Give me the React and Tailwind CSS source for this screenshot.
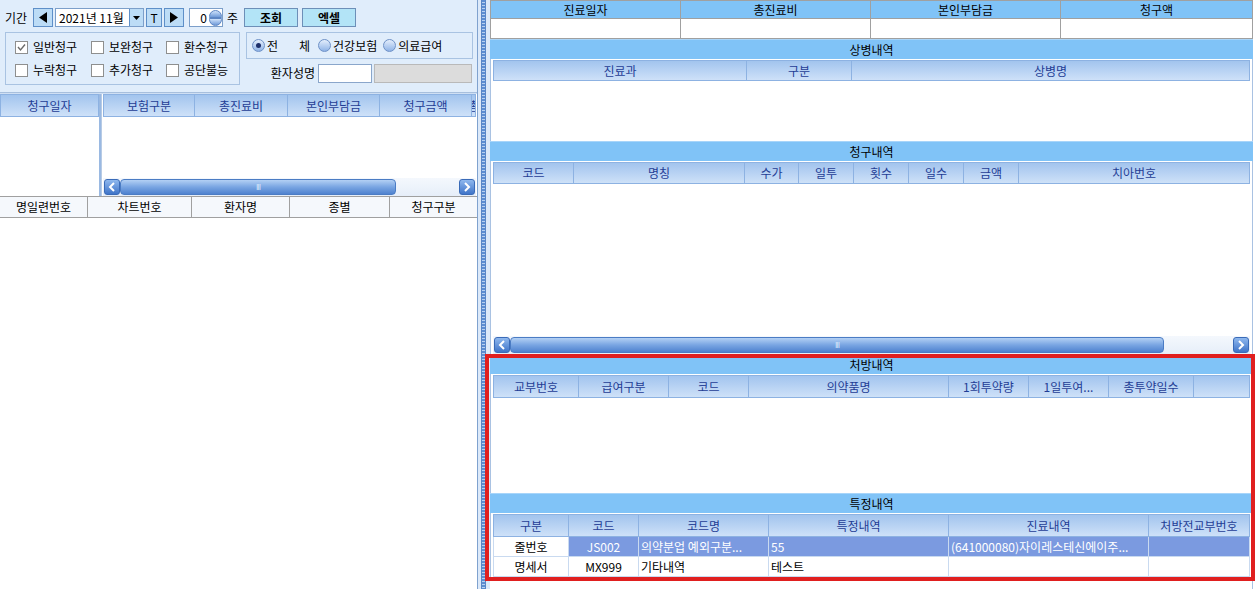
import React from 'react';

// 특정내역 / 처방내역 조회 화면 (청구 관리)

const topCols = [
    { label: '진료일자', w: 'w-[190px]' },
    { label: '총진료비', w: 'w-[190px]' },
    { label: '본인부담금', w: 'w-[190px]' },
    { label: '청구액', w: 'flex-1' },
];

const sangCols = [
    { label: '진료과', w: 'w-[253px]' },
    { label: '구분', w: 'w-[105px]' },
    { label: '상병명', w: 'flex-1' },
];

const claimCols = [
    { label: '코드', w: 'w-[80px]' },
    { label: '명칭', w: 'w-[171px]' },
    { label: '수가', w: 'w-[54px]' },
    { label: '일투', w: 'w-[55px]' },
    { label: '횟수', w: 'w-[55px]' },
    { label: '일수', w: 'w-[55px]' },
    { label: '금액', w: 'w-[55px]' },
    { label: '치아번호', w: 'flex-1' },
];

const rxCols = [
    { label: '교부번호', w: 'w-[85px]' },
    { label: '급여구분', w: 'w-[90px]' },
    { label: '코드', w: 'w-[80px]' },
    { label: '의약품명', w: 'w-[200px]' },
    { label: '1회투약량', w: 'w-[80px]' },
    { label: '1일투여...', w: 'w-[80px]' },
    { label: '총투약일수', w: 'w-[85px]' },
    { label: '', w: 'flex-1' },
];

const specCols = [
    { label: '구분', w: 'w-[75px]' },
    { label: '코드', w: 'w-[70px]' },
    { label: '코드명', w: 'w-[130px]' },
    { label: '특정내역', w: 'w-[180px]' },
    { label: '진료내역', w: 'w-[200px]' },
    { label: '처방전교부번호', w: 'flex-1' },
];

const specRows = [
    { kind: '줄번호', code: 'JS002', name: '의약분업 예외구분...', spec: '55', detail: '(641000080)자이레스테신에이주...', rx: '', selected: true },
    { kind: '명세서', code: 'MX999', name: '기타내역', spec: '테스트', detail: '', rx: '', selected: false },
];

const leftCols = [
    { label: '보험구분', w: 'w-[91px]' },
    { label: '총진료비', w: 'w-[93px]' },
    { label: '본인부담금', w: 'w-[92px]' },
    { label: '청구금액', w: 'w-[92px]' },
    { label: '총', w: 'flex-1' },
];

const listCols = [
    { label: '명일련번호', w: 'w-[88px]' },
    { label: '차트번호', w: 'w-[104px]' },
    { label: '환자명', w: 'w-[98px]' },
    { label: '종별', w: 'w-[100px]' },
    { label: '청구구분', w: 'flex-1' },
];

function GridHeader({ cols, h = 'h-[22px]' }) {
    return (
        <div className={`flex ${h} shrink-0 min-w-0 overflow-hidden bg-linear-to-b from-[#a2c4ee] to-[#cee1f8] border border-[#8db2e2]`}>
            {cols.map((c, i) => (
                <div
                    key={i}
                    className={`${c.w} shrink-0 min-w-0 flex items-center justify-center overflow-hidden whitespace-nowrap text-[#1f3d95] ${i < cols.length - 1 ? 'border-r border-[#8db2e2]' : ''}`}
                >
                    {c.label}
                </div>
            ))}
        </div>
    );
}

function SectionTitle({ children }) {
    return (
        <div className="h-[20px] shrink-0 flex items-center justify-center bg-[#80c3f7] border-t border-[#a8d5fa] text-black">
            {children}
        </div>
    );
}

function ArrowBtn({ dir }) {
    return (
        <div className="w-[16px] h-[16px] shrink-0 rounded-[3px] bg-linear-to-b from-[#8fb8ee] to-[#3f74c8] border border-[#3a6bb8] flex items-center justify-center">
            <svg width="8" height="10" viewBox="0 0 8 10">
                {dir === 'left'
                    ? <polyline points="6,1 2,5 6,9" fill="none" stroke="white" strokeWidth="2" />
                    : <polyline points="2,1 6,5 2,9" fill="none" stroke="white" strokeWidth="2" />}
            </svg>
        </div>
    );
}

function HScroll({ thumb }) {
    return (
        <div className="h-[18px] shrink-0 min-w-0 flex items-center px-[1px] bg-linear-to-b from-[#f4f8fd] to-[#e6eef9]">
            <ArrowBtn dir="left" />
            <div className={`${thumb} h-[16px] shrink-0 rounded-[4px] bg-linear-to-b from-[#b3d0f4] via-[#79a5e2] to-[#4f82cf] border border-[#4b7cc4] flex items-center justify-center`}>
                <span className="text-[8px] leading-none text-[#dce9fb] tracking-[-1px]">III</span>
            </div>
            <div className="flex-1 min-w-0" />
            <ArrowBtn dir="right" />
        </div>
    );
}

function Check({ checked, label }) {
    return (
        <label className="flex items-center gap-[5px]">
            <span className="w-[13px] h-[13px] bg-white border border-[#8e8f8f] flex items-center justify-center">
                {checked && (
                    <svg width="9" height="9" viewBox="0 0 9 9">
                        <polyline points="1,4 3.5,7 8,1.5" fill="none" stroke="#6b6b6b" strokeWidth="1.4" />
                    </svg>
                )}
            </span>
            <span>{label}</span>
        </label>
    );
}

function Radio({ checked, label }) {
    return (
        <label className="flex items-center gap-[2px]">
            <span className="w-[13px] h-[13px] rounded-full bg-linear-to-b from-[#e4eefc] to-[#8fb3e6] border border-[#6e91c7] flex items-center justify-center">
                {checked && <span className="w-[5px] h-[5px] rounded-full bg-[#1c2f6b]" />}
            </span>
            <span>{label}</span>
        </label>
    );
}

function SmallBtn({ children, w = 'w-[20px]' }) {
    return (
        <div className={`${w} h-[19px] shrink-0 flex items-center justify-center bg-[#bcdcf6] border border-[#5e8fc8] text-black`}>
            {children}
        </div>
    );
}

function LeftPanel() {
    return (
        <div className="w-[478px] shrink-0 flex flex-col border-r border-[#7fa2cf] bg-white">
            {/* 조회 조건 */}
            <div className="h-[92px] shrink-0 bg-[#e0edfb] pl-[5px] pt-[8px]">
                <div className="flex items-center h-[19px]">
                    <span className="w-[28px]">기간</span>
                    <SmallBtn>
                        <svg width="10" height="11" viewBox="0 0 10 11"><polygon points="9,0 1,5.5 9,11" fill="black" /></svg>
                    </SmallBtn>
                    <div className="ml-[2px] w-[89px] h-[19px] flex items-center bg-white border border-[#7c9fca]">
                        <span className="flex-1 pl-[3px] text-[12px]">2021년 11월</span>
                        <div className="w-[14px] h-full flex items-center justify-center bg-[#bcdcf6] border-l border-[#5e8fc8]">
                            <svg width="7" height="4" viewBox="0 0 7 4"><polygon points="0,0 7,0 3.5,4" fill="black" /></svg>
                        </div>
                    </div>
                    <div className="ml-[2px]"><SmallBtn w="w-[16px]">T</SmallBtn></div>
                    <div className="ml-[2px]">
                        <SmallBtn>
                            <svg width="10" height="11" viewBox="0 0 10 11"><polygon points="1,0 9,5.5 1,11" fill="black" /></svg>
                        </SmallBtn>
                    </div>
                    <div className="ml-[5px] w-[34px] h-[19px] flex items-center bg-white border border-[#7c9fca]">
                        <span className="flex-1 text-right pr-[1px]">0</span>
                        <div className="w-[14px] flex flex-col items-center justify-center">
                            <span className="w-[13px] h-[8px] rounded-t-full bg-linear-to-b from-[#cfe2fa] to-[#6f9ad8] border border-[#5d86c4]" />
                            <span className="w-[13px] h-[8px] rounded-b-full bg-linear-to-b from-[#cfe2fa] to-[#6f9ad8] border border-[#5d86c4]" />
                        </div>
                    </div>
                    <span className="ml-[4px]">주</span>
                    <div className="ml-[6px] w-[54px] h-[19px] flex items-center justify-center bg-[#b3e4f7] border border-[#6d8fb8] font-bold">조회</div>
                    <div className="ml-[4px] w-[54px] h-[19px] flex items-center justify-center bg-[#b3e4f7] border border-[#6d8fb8] font-bold">엑셀</div>
                </div>

                <div className="flex mt-[5px]">
                    <div className="w-[235px] h-[53px] shrink-0 border border-[#a9c3e2] grid grid-cols-[76px_75px_1fr] content-center gap-y-[9px] pl-[9px]">
                        <Check checked label="일반청구" />
                        <Check label="보완청구" />
                        <Check label="환수청구" />
                        <Check label="누락청구" />
                        <Check label="추가청구" />
                        <Check label="공단불능" />
                    </div>
                    <div className="ml-[6px] w-[227px] flex flex-col">
                        <div className="h-[27px] border border-[#a9c3e2] flex items-center pl-[5px] gap-[6px]">
                            <Radio checked label="전" />
                            <span className="w-[28px] text-right pr-[2px]">체</span>
                            <Radio label="건강보험" />
                            <Radio label="의료급여" />
                        </div>
                        <div className="flex items-center mt-[4px] h-[20px]">
                            <span className="w-[72px] text-right pr-[3px]">환자성명</span>
                            <div className="w-[54px] h-[19px] bg-white border border-[#8aa6cb]" />
                            <div className="ml-[2px] w-[98px] h-[19px] bg-[#dcdcdc] border border-[#b9b9b9]" />
                        </div>
                    </div>
                </div>
            </div>

            {/* 청구 목록 */}
            <div className="h-[104px] shrink-0 flex border-t border-[#a7bfdd] bg-[#cfdff3] pt-[1px]">
                <div className="w-[99px] shrink-0 flex flex-col bg-white">
                    <GridHeader cols={[{ label: '청구일자', w: 'flex-1' }]} h="h-[23px]" />
                </div>
                <div className="w-[2px] shrink-0 bg-[#9ab9e2]" />
                <div className="flex-1 min-w-0 overflow-hidden flex flex-col bg-white border-l border-[#b7cbe5] pl-[1px] pr-[1px]">
                    <GridHeader cols={leftCols} h="h-[23px]" />
                    <div className="flex-1" />
                    <HScroll thumb="w-[276px]" />
                </div>
            </div>

            <div className="h-[22px] shrink-0 flex bg-[#f5f8fc] border-y border-[#a0a0a0]">
                {listCols.map((c, i) => (
                    <div key={i} className={`${c.w} shrink-0 flex items-center justify-center ${i < listCols.length - 1 ? 'border-r border-[#a0a0a0]' : ''}`}>
                        {c.label}
                    </div>
                ))}
            </div>
            <div className="flex-1 bg-white" />
        </div>
    );
}

function Splitter() {
    return (
        <div className="w-[12px] shrink-0 flex bg-[#dce9f9] pl-[3px]">
            <div className="w-[5px] h-full bg-[repeating-linear-gradient(180deg,#5d8ed2_0px,#5d8ed2_2px,#b8d1f1_2px,#b8d1f1_3px)] border-x border-[#5a86c6]" />
        </div>
    );
}

function GridBox({ h, cols, headerH, children }) {
    return (
        <div className={`${h} shrink-0 flex flex-col px-[2px] pt-[1px] bg-white border-x border-[#a9c2e2]`}>
            <GridHeader cols={cols} h={headerH} />
            {children}
        </div>
    );
}

function RightPanel() {
    return (
        <div className="w-[765px] shrink-0 flex flex-col bg-white pr-[2px]">
            {/* 진료 요약 */}
            <div className="flex h-[19px] shrink-0 bg-[#80c3f7] border border-[#a0a0a0]">
                {topCols.map((c, i) => (
                    <div key={i} className={`${c.w} shrink-0 flex items-center justify-center ${i < topCols.length - 1 ? 'border-r border-[#a0a0a0]' : ''}`}>
                        {c.label}
                    </div>
                ))}
            </div>
            <div className="flex h-[20px] shrink-0 bg-white border-x border-b border-[#a0a0a0]">
                {topCols.map((c, i) => (
                    <div key={i} className={`${c.w} shrink-0 ${i < topCols.length - 1 ? 'border-r border-[#a0a0a0]' : ''}`} />
                ))}
            </div>

            <SectionTitle>상병내역</SectionTitle>
            <GridBox h="h-[82px]" cols={sangCols} headerH="h-[21px]" />

            <SectionTitle>청구내역</SectionTitle>
            <GridBox h="h-[193px]" cols={claimCols} headerH="h-[22px]">
                <div className="flex-1" />
                <HScroll thumb="w-[654px]" />
            </GridBox>

            {/* 강조 표시 영역 */}
            <div className="relative flex flex-col">
                <SectionTitle>처방내역</SectionTitle>
                <GridBox h="h-[119px]" cols={rxCols} headerH="h-[23px]" />

                <SectionTitle>특정내역</SectionTitle>
                <GridBox h="h-[65px]" cols={specCols} headerH="h-[23px]">
                    {specRows.map((r, ri) => {
                        const cell = `shrink-0 flex items-center overflow-hidden whitespace-nowrap border-r border-b border-[#c9daf0] h-[20px]`;
                        const sel = r.selected ? 'bg-[#7b9ae0] text-white' : 'bg-white text-black';
                        return (
                            <div key={ri} className="flex border-l border-[#c9daf0]">
                                <div className={`${cell} w-[75px] justify-center bg-white text-black`}>{r.kind}</div>
                                <div className={`${cell} w-[70px] justify-center ${sel}`}>{r.code}</div>
                                <div className={`${cell} w-[130px] pl-[2px] ${sel}`}>{r.name}</div>
                                <div className={`${cell} w-[180px] pl-[2px] ${sel}`}>{r.spec}</div>
                                <div className={`${cell} w-[200px] pl-[2px] ${sel}`}>{r.detail}</div>
                                <div className={`${cell} flex-1 ${sel}`}>{r.rx}</div>
                            </div>
                        );
                    })}
                </GridBox>

                <div className="absolute -left-[5px] top-0 -right-[2px] -bottom-[3px] border-[4px] border-[#e01f1f] pointer-events-none" />
            </div>

            <div className="flex-1 bg-white border-r border-[#a9c2e2]" />
        </div>
    );
}

export default function App() {
    return (
        <div className="w-[1255px] h-[589px] overflow-hidden flex bg-white text-[12px] leading-[14px] text-black font-['Noto_Sans_CJK_KR','Noto_Sans',sans-serif]">
            <LeftPanel />
            <Splitter />
            <RightPanel />
        </div>
    );
}
